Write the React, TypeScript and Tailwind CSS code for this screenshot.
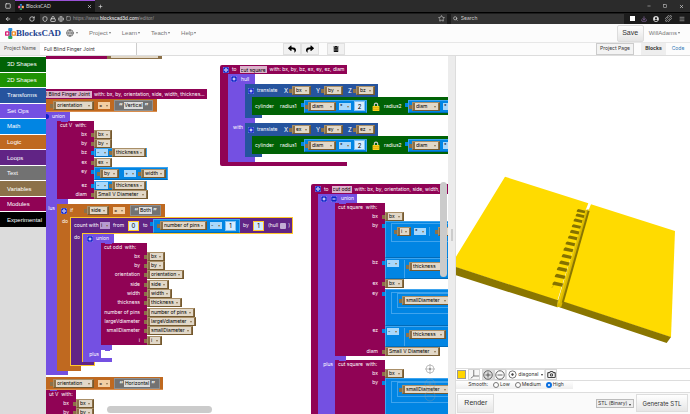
import { useState, type ReactNode } from 'react'
import {
    ArrowLeft,
    ArrowRight,
    Camera,
    Download,
    Globe,
    Lock,
    Menu,
    Minus,
    Plus,
    Puzzle,
    RotateCw,
    Search,
    Shield,
    Square,
    Star,
    X,
} from 'lucide-react'
import { FaReply, FaShare, FaTrashAlt, FaUserCircle } from 'react-icons/fa'
import clsx from 'clsx'

const categories = [
    { name: '3D Shapes', color: 'bg-[#006205]' },
    { name: '2D Shapes', color: 'bg-[#1f9303]' },
    { name: 'Transforms', color: 'bg-[#26549e]' },
    { name: 'Set Ops', color: 'bg-[#7450e2]' },
    { name: 'Math', color: 'bg-[#0185e3]' },
    { name: 'Logic', color: 'bg-[#bf6920]' },
    { name: 'Loops', color: 'bg-[#612485]' },
    { name: 'Text', color: 'bg-[#727272]' },
    { name: 'Variables', color: 'bg-[#8c7149]' },
    { name: 'Modules', color: 'bg-[#900355]' },
    { name: 'Experimental', color: 'bg-black' },
]

const MODULE = 'bg-[#900355]'
const LOGIC = 'bg-[#bf6920]'
const SETOP = 'bg-[#7450e2]'
const TRANSFORM = 'bg-[#26549e]'
const LOOP = 'bg-[#612485]'

/* ---------- fields and value blocks ---------- */

function Field({ name, tone = 'bg-[#e2d8c8]' }: { name: string; tone?: string }) {
    return (
        <span className="relative flex h-[7px] w-full">
            <select
                aria-label={name}
                className={clsx('h-[7px] w-full appearance-none overflow-hidden pl-px text-[5px] leading-none text-black', tone)}
            >
                <option>{name}</option>
            </select>
            <span className="pointer-events-none absolute top-[3px] right-[2px] border-x-[1px] border-t-[2px] border-x-transparent border-t-[#8c7149]" />
        </span>
    )
}

function Var({ name, w }: { name: string; w: string }) {
    return (
        <span
            className={clsx(
                'relative flex h-[9px] shrink-0 items-center border border-[#a98f68] border-r-[#74592f] border-b-[#74592f] bg-[#8c7149] pr-px pl-[2px]',
                "before:absolute before:top-[2px] before:-left-[4px] before:h-[4px] before:w-[3px] before:bg-[#8c7149] before:content-['']",
                w,
            )}
        >
            <Field name={name} />
        </span>
    )
}

function Num({ value, label, gold }: { value: string; label: string; gold?: boolean }) {
    return (
        <input
            aria-label={label}
            defaultValue={value}
            className={clsx(
                'h-[10px] w-[11px] shrink-0 border bg-[#d6ecff] text-center text-[6px] leading-none text-black',
                gold ? 'border-[#ffc72b]' : 'border-[#7fc0f3]',
            )}
        />
    )
}

function Op({ sign, tone = 'bg-[#a9d8fb]' }: { sign: string; tone?: string }) {
    return (
        <span className="w-[12px] shrink-0">
            <Field name={sign} tone={tone} />
        </span>
    )
}

function Str({ value, w }: { value: string; w: string }) {
    return (
        <span className={clsx('flex h-[11px] shrink-0 items-center justify-center gap-px border border-[#8f8f8f] bg-[#727272] text-[7px] leading-none text-white', w)}>
            <b className="pt-[2px]">“</b>
            <span className="bg-[#dcdcdc] px-px text-[5px] leading-[7px] text-black">{value}</span>
            <b className="pt-[2px]">”</b>
        </span>
    )
}

function MathBox({ w, h = 'h-[9px]', children }: { w: string; h?: string; children: ReactNode }) {
    return (
        <span
            className={clsx(
                'relative flex shrink-0 items-center border border-[#3fa4ee] border-b-[#016bb8] bg-[#0185e3]',
                "before:absolute before:top-[2px] before:-left-[4px] before:h-[4px] before:w-[3px] before:bg-[#0185e3] before:content-['']",
                w,
                h,
            )}
        >
            {children}
        </span>
    )
}

function Negate({ name, w, field }: { name: string; w: string; field: string }) {
    return (
        <MathBox w={w}>
            <span className="flex items-center gap-[4px] pl-px">
                <Op sign="-" />
                <Var name={name} w={field} />
            </span>
        </MathBox>
    )
}

function Mutator({ sign = '+' }: { sign?: string }) {
    return (
        <svg viewBox="0 0 12 12" className="size-[6px] shrink-0">
            <rect width="12" height="12" rx="3" fill="#1022c8" stroke="#b9c2ff" strokeWidth="1" />
            {sign === '*' && <circle cx="6" cy="6" r="2.5" fill="none" stroke="#fff" strokeWidth="2" />}
            {sign !== '*' && <path d="M3 6h6" stroke="#fff" strokeWidth="2" />}
            {sign === '+' && <path d="M6 3v6" stroke="#fff" strokeWidth="2" />}
        </svg>
    )
}

function Padlock() {
    return (
        <svg viewBox="0 0 14 16" className="h-[9px] w-[8px] shrink-0">
            <path d="M4 8V5a3 3 0 0 1 6 0v3" fill="none" stroke="#cfcfcf" strokeWidth="2" />
            <rect x="1" y="7" width="12" height="9" rx="1" fill="#ffd21c" />
            <path d="M1 10h12M1 13h12" stroke="#c99400" />
        </svg>
    )
}

/* ---------- statement blocks ---------- */

function Bar({ tone, size, children }: { tone: string; size: string; children?: ReactNode }) {
    return <div className={clsx('flex shrink-0 items-center whitespace-nowrap', tone, size)}>{children}</div>
}

// One mouth of a C-shaped block: the arm on the left, the nested blocks on the right
function Mouth({ tone, arm, label, children }: { tone: string; arm: string; label?: string; children: ReactNode }) {
    return (
        <div className="flex">
            <div className={clsx('flex shrink-0 justify-end pt-[2px] pr-[2px] leading-none', tone, arm)}>{label}</div>
            <div className="flex flex-col items-start">{children}</div>
        </div>
    )
}

type Arg = { label: string; h: string; value: ReactNode }

function Call({ name, w, notch = SETOP, args }: { name: string; w: string; notch?: string; args: Arg[] }) {
    return (
        <div className="relative">
            <div className={clsx('absolute top-0 left-[4px] h-px w-[7px]', notch)} />
            <div className={clsx('h-[9px] pl-[3px] leading-[9px] whitespace-pre', MODULE, w)}>{name}  with:</div>
            {args.map((arg) => (
                <div key={arg.label} className={clsx('flex', arg.h)}>
                    <div className={clsx('shrink-0 pr-[7px] text-right leading-[9px] whitespace-nowrap', MODULE, w)}>{arg.label}</div>
                    {arg.value}
                </div>
            ))}
        </div>
    )
}

/* ---------- the stacks on the canvas ---------- */

const cutV: Arg[] = [
    { label: 'bx', h: 'h-[9px]', value: <Var name="bx" w="w-[18px]" /> },
    { label: 'by', h: 'h-[9px]', value: <Var name="by" w="w-[18px]" /> },
    { label: 'bz', h: 'h-[10px]', value: <Negate name="thickness" w="w-[53px]" field="w-[34px]" /> },
    { label: 'ex', h: 'h-[9px]', value: <Var name="ex" w="w-[18px]" /> },
    {
        label: 'ey',
        h: 'h-[14px]',
        value: (
            <MathBox w="w-[74px]" h="h-[13px]">
                <span className="flex items-center gap-[5px] pl-[5px]">
                    <Var name="by" w="w-[19px]" />
                    <Op sign="+" />
                    <Var name="width" w="w-[25px]" />
                </span>
            </MathBox>
        ),
    },
    { label: 'ez', h: 'h-[9px]', value: <Negate name="thickness" w="w-[53px]" field="w-[34px]" /> },
    { label: 'diam', h: 'h-[9px]', value: <Var name="Small V Diameter" w="w-[54px]" /> },
]

const cutOdd: Arg[] = [
    { label: 'bx', h: 'h-[9px]', value: <Var name="bx" w="w-[18px]" /> },
    { label: 'by', h: 'h-[9px]', value: <Var name="by" w="w-[18px]" /> },
    { label: 'orientation', h: 'h-[10px]', value: <Var name="orientation" w="w-[37px]" /> },
    { label: 'side', h: 'h-[9px]', value: <Var name="side" w="w-[22px]" /> },
    { label: 'width', h: 'h-[9px]', value: <Var name="width" w="w-[25px]" /> },
    { label: 'thickness', h: 'h-[10px]', value: <Var name="thickness" w="w-[35px]" /> },
    { label: 'number of pins', h: 'h-[9px]', value: <Var name="number of pins" w="w-[48px]" /> },
    { label: 'largeVdiameter', h: 'h-[9px]', value: <Var name="largeVdiameter" w="w-[49px]" /> },
    { label: 'smallDiameter', h: 'h-[10px]', value: <Var name="smallDiameter" w="w-[46px]" /> },
    { label: 'i', h: 'h-[9px]', value: <Var name="i" w="w-[15px]" /> },
]

const smallDiameterSum = (
    <MathBox w="w-[80px]" h="h-[37px]">
        <span className="mb-[10px] ml-[5px] flex h-[22px] w-[74px] items-start border border-[#3fa4ee] pl-[5px]">
            <span className="flex h-[15px] w-[68px] items-center border border-[#3fa4ee] pl-[4px]">
                <Var name="smallDiameter" w="w-[48px]" />
            </span>
        </span>
    </MathBox>
)

const minusThickness = (
    <MathBox w="w-[80px]" h="h-[21px]">
        <span className="flex h-full items-start gap-[5px] pt-px pl-px">
            <Op sign="-" />
            <span className="flex h-[18px] items-center border-l border-[#3fa4ee] pb-[6px] pl-[4px]">
                <Var name="thickness" w="w-[37px]" />
            </span>
        </span>
    </MathBox>
)

const cutSquare: Arg[] = [
    { label: 'bx', h: 'h-[9px]', value: <Var name="bx" w="w-[19px]" /> },
    {
        label: 'by',
        h: 'h-[37px]',
        value: (
            <MathBox w="w-[80px]" h="h-[37px]">
                <span className="mb-[14px] ml-[5px] flex h-[19px] w-[74px] items-center gap-[3px] border border-[#3fa4ee] pb-[3px] pl-[5px]">
                    <Var name="i" w="w-[14px]" />
                    <Op sign="*" />
                    <span className="flex border-l border-[#3fa4ee] pl-[8px]">
                        <Var name="" w="w-[30px]" />
                    </span>
                </span>
            </MathBox>
        ),
    },
    { label: 'bz', h: 'h-[21px]', value: minusThickness },
    { label: 'ex', h: 'h-[10px]', value: <Var name="bx" w="w-[19px]" /> },
    { label: 'ey', h: 'h-[37px]', value: smallDiameterSum },
    { label: 'ez', h: 'h-[21px]', value: minusThickness },
    { label: 'diam', h: 'h-[9px]', value: <Var name="Small V Diameter" w="w-[55px]" /> },
]

const cutSquareAgain: Arg[] = [
    { label: 'bx', h: 'h-[9px]', value: <Var name="bx" w="w-[19px]" /> },
    { label: 'by', h: 'h-[37px]', value: smallDiameterSum },
]

function IfRow({ w, value, strW }: { w: string; value: string; strW: string }) {
    return (
        <div className={clsx('flex h-[13px] shrink-0 items-center gap-[4px] border-b border-[#d98d4c] pl-[7px]', LOGIC, w)}>
            <Var name="orientation" w="w-[41px]" />
            <Op sign="=" tone="bg-[#f3cfa4]" />
            <Str value={value} w={strW} />
        </div>
    )
}

// The selected block, outlined in gold
function CountLoop() {
    return (
        <div>
            <Bar tone={LOOP} size="h-[17px] w-[223px] pl-[3px] border border-[#ffc72b]">
                <span className="w-[26px]">count with</span>
                <span className="w-[10px]">
                    <Field name="i" tone="bg-[#b79bd0]" />
                </span>
                <span className="w-[18px] pl-[3px]">from</span>
                <Num label="from" value="0" gold />
                <span className="w-[14px] pl-[4px]">to</span>
                <MathBox w="w-[87px]" h="h-[14px]">
                    <span className="flex items-center gap-[3px] pl-[6px]">
                        <Var name="number of pins" w="w-[47px]" />
                        <Op sign="-" />
                        <Num label="minus" value="1" />
                    </span>
                </MathBox>
                <span className="w-[13px] pl-[3px]">by</span>
                <Num label="by" value="1" gold />
                <label className="flex items-center gap-[2px] pl-[4px]">
                    (hull
                    <input type="checkbox" className="size-[6px] appearance-none rounded-[1px] bg-[#c3add6]" />)
                </label>
            </Bar>
            <Mouth tone={LOOP} arm="relative -mt-px w-[13px] border-x border-[#ffc72b]" label="do">
                <Bar tone={SETOP} size="h-[9px] w-[31px] gap-[3px] pl-[4px]">
                    <Mutator />
                    union
                </Bar>
                <Mouth tone={SETOP} arm="w-[18px]">
                    <Call name="cut odd" w="w-[46px]" args={cutOdd} />
                </Mouth>
                <Bar tone={SETOP} size="h-[5px] w-[29px]" />
                <Mouth tone={SETOP} arm="w-[18px]" label="plus">
                    <div className="relative h-[8px] w-[11px] rounded-tl-[2px] bg-white">
                        <div className={clsx('absolute top-0 left-[4px] h-px w-[5px]', SETOP)} />
                    </div>
                </Mouth>
                <Bar tone={SETOP} size="h-[4px] w-[29px]" />
            </Mouth>
            <Bar tone={LOOP} size="h-[4px] w-[25px] border border-t-0 border-[#ffc72b]" />
        </div>
    )
}

function FingerJointStack() {
    return (
        <>
            <Bar tone={MODULE} size="h-[10px] w-[161px] gap-[2px]">
                <input
                    aria-label="Module name"
                    defaultValue="l Blind Finger Joint"
                    className="h-[7px] w-[46px] bg-[#dcb3cb] text-[5px] leading-none text-black"
                />
                with: bx, by, orientation, side, width, thicknes…
            </Bar>
            <IfRow w="w-[111px]" value="Vertical" strW="w-[39px]" />
            <Bar tone={SETOP} size="h-[9px] w-[24px] gap-[3px]">
                <span className="h-[5px] w-[3px] rounded-r bg-[#1022c8]" />
                union
            </Bar>
            <Mouth tone={SETOP} arm="w-[11px]">
                <Call name="cut V" w="w-[37px]" args={cutV} />
            </Mouth>
            <Bar tone={SETOP} size="h-[5px] w-[22px]" />
            <Mouth tone={SETOP} arm="w-[11px]" label="lus">
                <Bar tone={LOGIC} size="h-[13px] w-[108px] pl-[4px]">
                    <Mutator sign="*" />
                    <span className="w-[20px] pl-[3px]">if</span>
                    <Var name="side" w="w-[22px]" />
                    <span className="flex pr-[5px] pl-[4px]">
                        <Op sign="=" tone="bg-[#f3cfa4]" />
                    </span>
                    <Str value="Both" w="w-[31px]" />
                </Bar>
                <Mouth tone={LOGIC} arm="w-[13px]" label="do">
                    <CountLoop />
                </Mouth>
                <Bar tone={LOGIC} size="h-[5px] w-[24px]" />
            </Mouth>
            <Bar tone={SETOP} size="h-[4px] w-[22px]" />
            <div className="h-[2px]" />
            <IfRow w="w-[117px]" value="Horizontal" strW="w-[46px]" />
            <Call name="ut V" w="w-[30px]" args={cutV.slice(0, 2)} />
        </>
    )
}

function Translate({ axes }: { axes: string[] }) {
    return (
        <>
            <Bar tone={TRANSFORM} size="h-[13px] w-[133px] pl-[3px]">
                <Mutator />
                <span className="w-[25px] pl-[3px]">translate</span>
                {axes.map((axis, i) => (
                    <span key={axis} className="flex items-center gap-[4px] pl-[5px] text-[6px]">
                        <span className="w-[4px]">{'XYZ'[i]}</span>
                        <Var name={axis} w="w-[19px]" />
                    </span>
                ))}
            </Bar>
            <Mouth tone={TRANSFORM} arm="w-[7px]">
                <div className="flex h-[18px] items-center bg-[#006205] pl-[3px] whitespace-nowrap">
                    <span className="w-[25px]">cylinder</span>
                    {['radius1', 'radius2'].map((radius) => (
                        <span key={radius} className="flex items-center">
                            <span className="w-[24px]">{radius}</span>
                            <MathBox w="w-[63px]" h="h-[13px]">
                                <span className="flex items-center gap-[3px] pl-[3px]">
                                    <Var name="diam" w="w-[28px]" />
                                    <Op sign="*" />
                                    <Num label={radius} value="2" />
                                </span>
                            </MathBox>
                            <span className="w-[17px] pl-[5px]">
                                <Padlock />
                            </span>
                        </span>
                    ))}
                </div>
            </Mouth>
            <Bar tone={TRANSFORM} size="h-[3px] w-[17px]" />
        </>
    )
}

function CutSquareStack() {
    return (
        <>
            <Bar tone={MODULE} size="h-[9px] w-[127px] gap-[3px] pl-[3px] rounded-tl-[2px]">
                <Mutator sign="*" />
                to
                <input
                    aria-label="Module name"
                    defaultValue="cut square"
                    className="h-[7px] w-[27px] bg-[#dcb3cb] pl-px text-[5px] leading-none text-black"
                />
                with: bx, by, bz, ex, ey, ez, diam
            </Bar>
            <Mouth tone={MODULE} arm="w-[8px]">
                <Bar tone={SETOP} size="h-[10px] w-[27px] gap-[4px] pl-[3px]">
                    <Mutator />
                    hull
                </Bar>
                <Mouth tone={SETOP} arm="w-[17px]">
                    <Translate axes={['bx', 'by', 'bz']} />
                </Mouth>
                <Bar tone={SETOP} size="h-[5px] w-[27px]" />
                <Mouth tone={SETOP} arm="w-[17px]" label="with">
                    <Translate axes={['ex', 'ey', 'ez']} />
                </Mouth>
                <Bar tone={SETOP} size="h-[5px] w-[27px]" />
            </Mouth>
            <Bar tone={MODULE} size="h-[4px] w-[127px] rounded-bl-[2px]" />
        </>
    )
}

function CutOddStack() {
    return (
        <>
            <Bar tone={MODULE} size="h-[10px] w-[180px] gap-[3px] pl-[4px] rounded-tl-[2px]">
                <Mutator sign="*" />
                to
                <input
                    aria-label="Module name"
                    defaultValue="cut odd"
                    className="h-[7px] w-[20px] bg-[#dcb3cb] pl-px text-[5px] leading-none text-black"
                />
                with: bx, by, orientation, side, width, t
            </Bar>
            <Mouth tone={MODULE} arm="w-[7px]">
                <Bar tone={SETOP} size="h-[9px] w-[39px] gap-[4px] pl-[3px]">
                    <Mutator />
                    <Mutator sign="-" />
                    union
                </Bar>
                <Mouth tone={SETOP} arm="w-[17px]">
                    <Call name="cut square" w="w-[50px]" args={cutSquare} />
                </Mouth>
                <Bar tone={SETOP} size="h-[4px] w-[28px]" />
                <Mouth tone={SETOP} arm="w-[17px]" label="plus">
                    <Call name="cut square" w="w-[50px]" args={cutSquareAgain} />
                </Mouth>
            </Mouth>
        </>
    )
}

function Workspace() {
    return (
        <div className="relative h-full min-w-0 flex-1 overflow-hidden bg-white text-[5px] leading-none text-white">
            <div className="absolute top-0 left-0 flex">
                <div className={clsx('h-[3px] w-[61px]', MODULE)} />
                <div className="h-[3px] w-[55px] border-x-4 border-b border-[#8c7149] bg-[#e2d8c8]" />
            </div>
            <div className="absolute top-[33px] left-0">
                <FingerJointStack />
            </div>
            <div className="absolute top-[9px] left-[174px]">
                <CutSquareStack />
            </div>
            <div className="absolute top-[128px] left-[265px]">
                <CutOddStack />
            </div>

            {/* Zoom controls and scrollbars */}
            <svg viewBox="0 0 16 40" className="absolute right-[10px] bottom-[10px] h-[40px] w-[16px]" fill="none" stroke="#999" strokeWidth="0.6">
                <circle cx="8" cy="5" r="4" />
                <circle cx="8" cy="5" r="1.2" fill="#999" />
                <path d="M8 0v3M8 7v3M3 5h3M10 5h3" />
                <circle cx="8" cy="20" r="5" opacity=".6" />
                <circle cx="8" cy="32" r="5" opacity=".6" />
                <path d="M5 20h6M8 17v6M5 32h6" opacity=".6" />
            </svg>
            <div className="absolute top-[126px] right-px h-[95px] w-[7px] rounded-full bg-[#cbcbcb]" />
            <div className="absolute bottom-px left-[61px] h-[7px] w-[105px] rounded-full bg-[#cbcbcb]" />
        </div>
    )
}

/* ---------- render preview ---------- */

const fingers = [
    [393, 124], [390, 138], [384, 153], [379, 170], [374, 187], [368, 204], [361, 222],
    [355, 240], [350, 260], [343, 280], [336, 299], [330, 320], [323, 343],
]

function Preview() {
    return (
        <svg viewBox="18 -342 702 936" preserveAspectRatio="xMinYMid slice" className="min-h-0 w-full flex-1 bg-white">
            <path d="M18 260 165 20 415 100 405 125 322 392 18 292Z" fill="#ffdb00" />
            <path d="M18 291 324 391 322 412 18 316Z" fill="#8a7600" />
            <path d="M423 103 675 183 663 502 338 395 415 122Z" fill="#ffdb00" />
            <path d="M338 394 663 501 650 519 328 412Z" fill="#8a7600" />
            <path d="M406 120 416 118 334 410 320 412 324 392Z" fill="#d9b800" />
            <path d="M416 122 338 398" stroke="#8a7600" strokeWidth="6" />
            <path d="M406 122 326 400" stroke="#f2d000" strokeWidth="4" />
            {fingers.map(([x, y], i) => (
                <path
                    key={y}
                    transform={`translate(${x} ${y}) scale(${1 + i * 0.02})`}
                    d="M-8-7 13-2 11 6-13 1Q-13-5-8-7Z"
                    fill="#857200"
                />
            ))}
            <path d="M305 354 314 341" stroke="#8a7600" strokeWidth="1" />
        </svg>
    )
}

function ViewButton({ label, active, children }: { label: string; active?: boolean; children: ReactNode }) {
    return (
        <button
            aria-label={label}
            className={clsx('flex h-full w-[12px] items-center justify-center border border-[#d5d5d5] text-[#444]', active ? 'bg-[#ddd]' : 'bg-[#f7f7f7]')}
        >
            {children}
        </button>
    )
}

function RenderPane() {
    const [smooth, setSmooth] = useState('High')

    return (
        <aside className="flex min-w-0 flex-[234] flex-col border-l border-[#ddd] bg-white text-[#333]">
            <Preview />
            <div className="flex h-[13px] items-stretch border-y border-[#ddd]">
                <button aria-label="Color" className="m-px mr-[2px] w-[9px] border border-[#999] bg-[#ffd500]" />
                <ViewButton label="Axes">
                    <svg viewBox="0 0 12 12" className="size-[9px]" fill="none" stroke="#555">
                        <path d="M5 0v8h7M5 8l-4 3" />
                    </svg>
                </ViewButton>
                <span className="w-[2px]" />
                <ViewButton label="Zoom in" active>
                    <svg viewBox="0 0 20 20" className="size-[10px]" fill="none" stroke="#444" strokeWidth="1.6">
                        <circle cx="10" cy="10" r="8.5" />
                        <path d="M5 10h10M10 5v10" />
                    </svg>
                </ViewButton>
                <ViewButton label="Zoom out">
                    <svg viewBox="0 0 20 20" className="size-[10px]" fill="none" stroke="#444" strokeWidth="1.6">
                        <circle cx="10" cy="10" r="8.5" />
                        <path d="M5 10h10" />
                    </svg>
                </ViewButton>
                <label className="flex items-center gap-px border border-[#ddd] px-px text-[5px]">
                    <svg viewBox="0 0 20 20" className="size-[9px]" fill="none" stroke="#444" strokeWidth="1.6">
                        <circle cx="10" cy="10" r="8" />
                        <circle cx="10" cy="10" r="2" fill="#444" />
                    </svg>
                    <select aria-label="View" className="w-[22px] appearance-none">
                        <option>diagonal</option>
                    </select>
                    <Caret />
                </label>
                <ViewButton label="Take picture">
                    <Camera className="size-[9px]" strokeWidth={3} />
                </ViewButton>
            </div>
            <fieldset className="flex h-[12px] items-center border-b border-[#ddd] text-[5px]">
                <div className="flex h-full w-1/2 items-center gap-[5px] bg-gradient-to-b from-white to-[#eee] pl-[12px]">
                    <span>Smooth:</span>
                    {['Low', 'Medium', 'High'].map((level) => (
                        <label key={level} className="flex items-center gap-px">
                            <input
                                type="radio"
                                name="smooth"
                                checked={smooth === level}
                                onChange={() => setSmooth(level)}
                                className="size-[6px] shrink-0 appearance-none rounded-full border border-[#777] bg-white checked:border-2 checked:border-[#0a6fe0]"
                            />
                            {level}
                        </label>
                    ))}
                </div>
            </fieldset>
            <div className="flex h-[21px] items-center bg-[#fafafa] pb-px pl-px">
                <button className="h-[19px] w-[37px] border border-[#ddd] bg-gradient-to-b from-white to-[#e6e6e6] font-[Liberation_Sans] text-[7px]">
                    Render
                </button>
                <span className="relative mr-[2px] ml-auto flex items-center">
                    <select aria-label="Format" className="h-[9px] w-[38px] appearance-none border border-[#bbb] bg-[#eee] pl-px text-[5px]">
                        <option>STL (Binary)</option>
                    </select>
                    <span className="pointer-events-none absolute right-[3px]">
                        <Caret />
                    </span>
                </span>
                <button className="mr-[2px] h-[18px] w-[52px] border border-[#ddd] bg-gradient-to-b from-white to-[#e6e6e6] text-[6px]">Generate STL</button>
            </div>
        </aside>
    )
}

/* ---------- browser and site chrome ---------- */

function Caret() {
    return <span className="inline-block border-x-[1px] border-t-[2px] border-x-transparent border-t-current align-middle" />
}

function Logo({ className }: { className: string }) {
    return (
        <svg viewBox="0 0 24 24" className={className}>
            <rect x="7" y="0" width="9" height="7" rx="2" fill="#2e8fd6" />
            <rect x="0" y="7" width="10" height="10" rx="2" fill="#d6186f" />
            <rect x="14" y="7" width="10" height="10" rx="2" fill="#f58a1f" />
            <rect x="7" y="17" width="9" height="7" rx="2" fill="#2fa84f" />
            <path d="M10 5h4v14h-4z" fill="#1f6fb5" />
            <path d="M3 10h4v4H3zM17 10h4v4h-4z" fill="#fff" />
        </svg>
    )
}

function BrowserBar() {
    return (
        <div className="shrink-0 bg-[#1c1c1c] text-[#ddd]">
            <div className="flex h-[12px] items-center bg-[#2b2b2b]">
                <span className="flex w-[15px] justify-center">
                    <Square className="size-[6px]" strokeWidth={3} />
                </span>
                <div className="flex h-full w-[80px] items-center gap-[2px] border-t border-[#9a52d6] bg-[#161616] px-[3px] font-[Lato] text-[5px]">
                    <Logo className="size-[6px]" />
                    BlocksCAD
                    <X className="ml-auto size-[5px]" strokeWidth={3} />
                </div>
                <Plus className="ml-[3px] size-[5px]" strokeWidth={3} />
                <div className="ml-auto flex items-center gap-[12px] pr-[6px]">
                    <Minus className="size-[4px]" strokeWidth={3} />
                    <Square className="size-[4px]" strokeWidth={3} />
                    <X className="size-[5px]" strokeWidth={3} />
                </div>
            </div>
            <div className="flex h-[12px] items-center border-t border-black px-[5px]">
                <ArrowLeft className="size-[6px]" strokeWidth={3} />
                <ArrowRight className="ml-[6px] size-[6px] text-[#777]" strokeWidth={3} />
                <RotateCw className="ml-[6px] size-[6px]" strokeWidth={3} />
                <div className="ml-[5px] flex h-[10px] flex-[408] items-center gap-[2px] bg-[#333] px-[2px] text-[5px]">
                    <Shield className="size-[6px]" strokeWidth={3} />
                    <Lock className="size-[6px]" strokeWidth={3} />
                    <Globe className="size-[6px]" />
                    <Square className="size-[5px]" />
                    <span className="font-[Liberation_Sans] text-[#999]">
                        https://www.<span className="text-white">blockscad3d.com</span>/editor/
                    </span>
                    <Star className="ml-auto size-[7px]" />
                </div>
                <label className="mr-[6px] ml-[4px] flex h-[10px] flex-[173] items-center gap-[3px] bg-[#333] pl-[2px] text-[5px]">
                    <Search className="size-[5px]" strokeWidth={3} />
                    <input aria-label="Search" placeholder="Search" className="w-full min-w-0 placeholder:text-[#ccc]" />
                </label>
                <div className="flex items-center gap-[6px]">
                    <span className="size-[5px] bg-white" />
                    <Download className="size-[6px] text-[#b58ad6]" />
                    <FaUserCircle className="size-[6px]" />
                    <Puzzle className="size-[7px]" />
                    <Menu className="ml-px size-[6px]" />
                </div>
            </div>
        </div>
    )
}

function SiteHeader() {
    return (
        <header className="shrink-0 bg-[#fcfcfc] text-[#777]">
            <nav className="flex h-[19px] items-center border-b border-[#e7e7e7] pl-[5px] font-[Liberation_Sans] text-[6px]">
                <a href="#home" className="flex items-center font-[Liberation_Serif] text-[9px] leading-none font-bold text-[#1b3f8f]">
                    <Logo className="size-[11px]" />
                    BlocksCAD
                </a>
                <div className="ml-[5px] flex items-center gap-[11px]">
                    <a href="#language" className="flex items-center gap-[2px]">
                        <Globe className="size-[8px]" strokeWidth={3} /> <Caret />
                    </a>
                    {['Project', 'Learn', 'Teach', 'Help'].map((item) => (
                        <a key={item} href={`#${item}`} className="flex items-center gap-px">
                            {item} <Caret />
                        </a>
                    ))}
                </div>
                <button className="mr-[5px] ml-auto h-[17px] w-[27px] rounded-[2px] border border-[#ddd] bg-gradient-to-b from-white to-[#e4e4e4] text-[7px] text-[#333]">
                    Save
                </button>
                <a href="#user" className="mr-[10px] flex items-center gap-px">
                    WillAdams <Caret />
                </a>
            </nav>
            <div className="flex h-[13px] items-center border-b border-[#ddd] text-[5px] text-[#333]">
                <label htmlFor="project" className="flex h-full w-[40px] items-center justify-center bg-[#eee] text-[#555]">
                    Project Name
                </label>
                <input id="project" defaultValue="Full Blind Finger Joint" className="h-full w-[97px] border-r border-[#ccc] bg-white pl-[4px]" />
                <div className="ml-[146px] flex h-full text-black">
                    <button aria-label="Undo" className="flex w-[18px] items-center justify-center border border-[#e0e0e0] bg-[#f1f1f1]">
                        <FaReply className="size-[8px]" />
                    </button>
                    <button aria-label="Redo" className="flex w-[18px] items-center justify-center border border-[#e0e0e0] bg-[#f1f1f1]">
                        <FaShare className="size-[8px]" />
                    </button>
                    <button aria-label="Delete" className="ml-[8px] flex w-[18px] items-center justify-center border border-[#e0e0e0] bg-[#f1f1f1]">
                        <FaTrashAlt className="size-[6px]" />
                    </button>
                </div>
                <button className="mr-[7px] ml-auto h-[12px] w-[38px] border border-[#ccc] bg-[#f3f3f3]">Project Page</button>
                <button className="h-full w-[25px] bg-[#eee] font-bold">Blocks</button>
                <button className="w-[24px] text-[#337ab7]">Code</button>
            </div>
        </header>
    )
}

export default function App() {
    return (
        <div className="flex h-screen flex-col overflow-hidden bg-white font-[Inter,sans-serif]">
            <BrowserBar />
            <SiteHeader />
            <main className="flex min-h-0 flex-1">
                <div className="flex min-w-0 flex-[449]">
                    <div className="w-[46px] shrink-0 bg-[#dcdcdc]">
                        <div className="flex h-[171px] flex-col gap-px bg-white pt-px font-[Liberation_Sans] text-[6px] text-white">
                            {categories.map((category) => (
                                <button key={category.name} className={clsx('flex-1 pl-[7px] text-left leading-none', category.color)}>
                                    {category.name}
                                </button>
                            ))}
                        </div>
                    </div>
                    <Workspace />
                </div>
                <div className="flex w-[7px] shrink-0 items-center justify-center bg-[#ececec]">
                    <span className="h-[12px] w-[2px] border-x border-[#ccc]" />
                </div>
                <RenderPane />
            </main>
        </div>
    )
}
